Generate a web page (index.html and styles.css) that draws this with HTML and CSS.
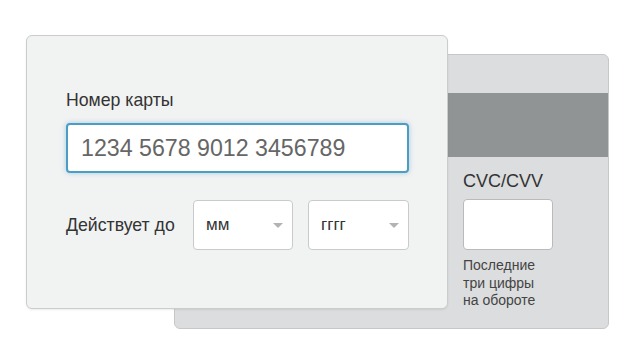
FILE: index.html
```html
<!DOCTYPE html>
<html lang="ru">
<head>
  <meta charset="UTF-8" />
  <meta name="viewport" content="width=device-width, initial-scale=1.0"/>
  <title>Оплата картой</title>
  <link rel="stylesheet" href="styles.css">
</head>
<body>
  <div class="cards">
    <!-- Back side -->
    <div class="card-back">
      <div class="stripe"></div>
      <div class="cvc">
        <label class="cvc-label" for="cvc">CVC/CVV</label>
        <input id="cvc" class="cvc-input" type="text" maxlength="3">
        <p class="cvc-hint">Последние<br>три цифры<br>на обороте</p>
      </div>
    </div>

    <!-- Front side -->
    <div class="card-front">
      <label class="field-label" for="number">Номер карты</label>
      <input id="number" class="number-input" type="text" placeholder="1234 5678 9012 3456789">
      <div class="expiry">
        <span class="expiry-label">Действует до</span>
        <div class="select select-month"><span>мм</span><i class="arrow"></i></div>
        <div class="select select-year"><span>гггг</span><i class="arrow"></i></div>
      </div>
    </div>
  </div>
</body>
</html>
```

FILE: styles.css
```css
body {
  margin: 0;
  background: #fff;
  font-family: "Liberation Sans", Arial, sans-serif;
  color: #333;
}

.cards {
  display: grid;
}

.card-back,
.card-front {
  grid-area: 1 / 1;
  box-sizing: border-box;
}

.card-back {
  margin: 54px 0 0 174px;
  width: 435px;
  height: 275px;
  background: #dcddde;
  border: 1px solid #c6c7c8;
  border-radius: 6px;
}

.stripe {
  margin-top: 38px;
  height: 64px;
  background: #919495;
}

.cvc {
  padding: 14px 0 0 288px;
}

.cvc-label {
  display: block;
  font-size: 18px;
  line-height: 21px;
  color: #333;
}

.cvc-input {
  display: block;
  box-sizing: border-box;
  margin-top: 7px;
  width: 90px;
  height: 51px;
  background: #fff;
  border: 1px solid #b9babb;
  border-radius: 4px;
}

.cvc-hint {
  margin: 7px 0 0;
  font-size: 14px;
  line-height: 17.5px;
  color: #444;
}

.card-front {
  position: relative;
  margin: 35px 0 0 26px;
  width: 422px;
  height: 274px;
  padding: 54px 0 0 39px;
  background: #f1f2f2;
  border: 1px solid #cbcccc;
  border-radius: 6px;
  box-shadow: 0 1px 2px rgba(0, 0, 0, 0.08);
}

.field-label {
  display: block;
  font-size: 17.7px;
  line-height: 21px;
  color: #333;
}

.number-input {
  display: block;
  box-sizing: border-box;
  margin-top: 12px;
  width: 343px;
  height: 50px;
  padding: 0 13px;
  font-family: inherit;
  font-size: 23.2px;
  color: #666;
  background: #fff;
  border: 2px solid #4c9dc4;
  border-radius: 4px;
  box-shadow: 0 0 5px rgba(76, 157, 196, 0.45);
  outline: none;
}

.number-input::placeholder {
  color: #666;
}

.expiry {
  display: flex;
  align-items: center;
  margin-top: 27px;
  height: 50px;
}

.expiry-label {
  width: 127px;
  font-size: 17.7px;
  color: #333;
}

.select {
  box-sizing: border-box;
  display: flex;
  align-items: center;
  justify-content: space-between;
  height: 50px;
  padding: 0 9px 0 12px;
  background: #fff;
  border: 1px solid #c9cacb;
  border-radius: 4px;
  font-size: 17px;
  color: #333;
}

.select-month {
  width: 100px;
}

.select-year {
  width: 101px;
  margin-left: 15px;
}

.arrow {
  width: 0;
  height: 0;
  border-left: 5px solid transparent;
  border-right: 5px solid transparent;
  border-top: 5px solid #b3b3b3;
}
```
